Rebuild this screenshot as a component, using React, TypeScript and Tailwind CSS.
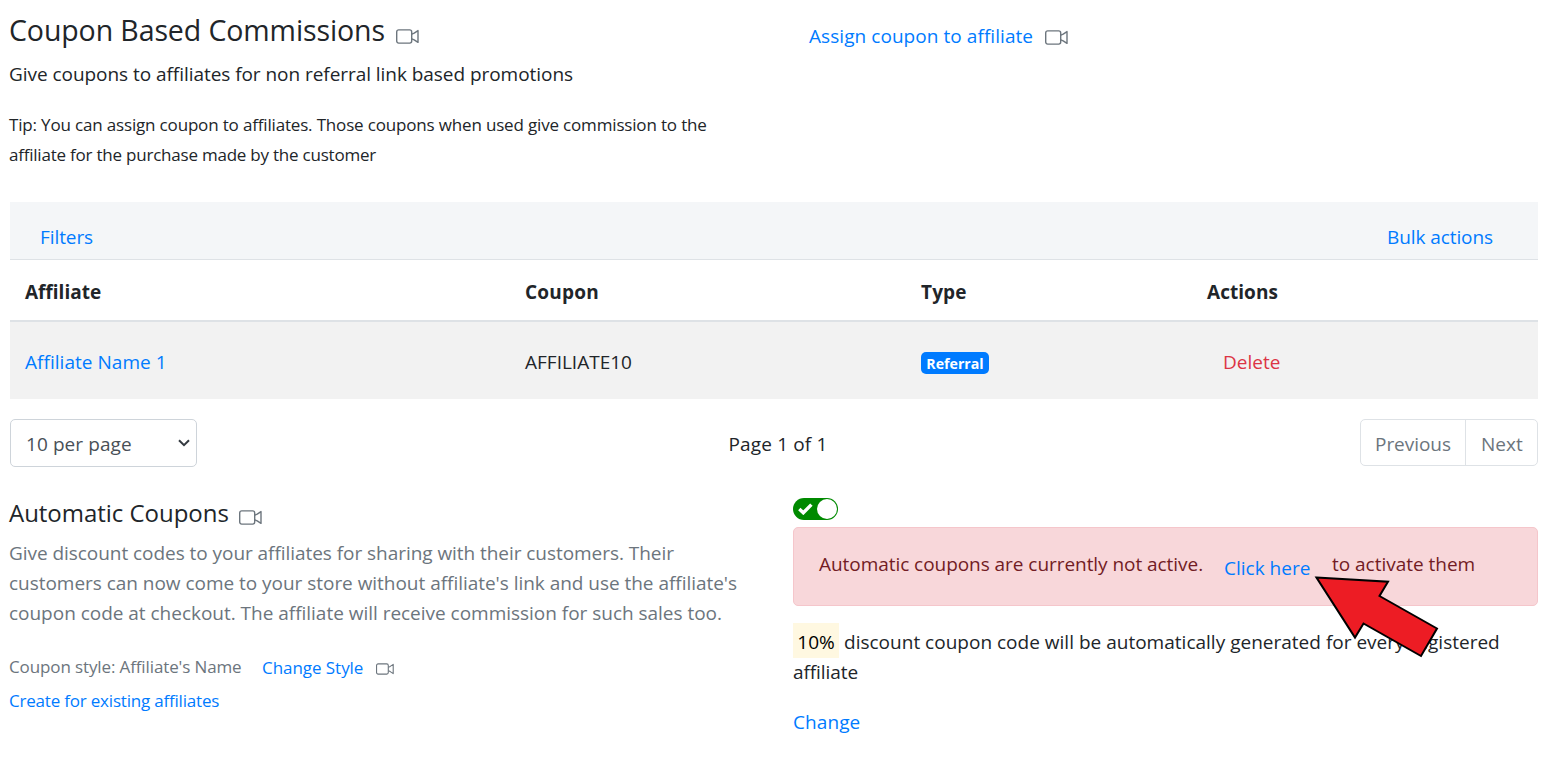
import React from "react";

function Camera({ className }: { className: string }) {
  return (
    <svg viewBox="0 0 23 15" fill="none" stroke="#6c757d" strokeWidth="1.4" strokeLinejoin="round" className={className}>
      <rect x="0.7" y="0.9" width="15" height="13.2" rx="2" />
      <path d="M15.8 5.2 L18.2 4.2 L22 1.6 V13.4 L18.2 10.8 L15.8 9.8" />
    </svg>
  );
}

export default function App() {
  return (
    <div className="h-[761px] w-[1547px] overflow-hidden bg-white pr-[9px] pl-[10px] font-['Open_Sans','Noto_Sans',sans-serif] text-[19px] leading-[30px] whitespace-nowrap text-[#212529]">
      <section className="-ml-px flex h-[202px]">
        <div className="w-[800px] pt-3">
          <div className="flex h-9 items-center">
            <h1 className="w-[387px] text-[28.5px] leading-9 tracking-[-0.1px]">Coupon Based Commissions</h1>
            <Camera className="mt-3 h-[15px] w-[23px]" />
          </div>
          <p className="mt-[11px] tracking-[-0.048px]">Give coupons to affiliates for non referral link based promotions</p>
          <p className="mt-[21px] text-[17px] tracking-[-0.168px]">
            Tip: You can assign coupon to affiliates. Those coupons when used give commission to the
            <br />
            <span className="tracking-[-0.22px]">affiliate for the purchase made by the customer</span>
          </p>
        </div>
        <div className="flex h-[51px] pt-[21px]">
          <a className="w-[236px] tracking-[0.06px] text-[#007bff]">Assign coupon to affiliate</a>
          <Camera className="mt-[9px] h-[15px] w-[23px]" />
        </div>
      </section>

      <section>
        <div className="flex h-[57px] items-center justify-between bg-[#f4f6f8] pt-[13px] pr-[45px] pl-[30px] text-[#007bff]">
          <a className="tracking-[-0.09px]">Filters</a>
          <a className="tracking-[-0.08px]">Bulk actions</a>
        </div>
        <table className="w-full table-fixed border-collapse text-left">
          <colgroup>
            <col className="w-[500px]" />
            <col className="w-[396px]" />
            <col className="w-[286px]" />
            <col />
          </colgroup>
          <thead>
            <tr className="h-[61px] border-t border-b-2 border-[#dee2e6] font-bold">
              <th className="px-[15px] pt-[5px]">Affiliate</th>
              <th className="px-[15px] pt-[5px] tracking-[0.2px]">Coupon</th>
              <th className="px-[15px] pt-[5px] tracking-[0.15px]">Type</th>
              <th className="px-[15px] pt-[5px] tracking-[0.05px]">Actions</th>
            </tr>
          </thead>
          <tbody>
            <tr className="h-[78px] bg-[#f2f2f2]">
              <td className="px-[15px] pt-1 tracking-[0.04px] text-[#007bff]">Affiliate Name 1</td>
              <td className="px-[15px] pt-1">AFFILIATE10</td>
              <td className="px-[15px] pt-[6px]">
                <span className="block h-[22px] w-[68px] rounded-[5px] bg-[#007bff] text-center text-[14.2px] leading-[23px] font-bold text-white">Referral</span>
              </td>
              <td className="pt-1 pl-[31px] text-[#dc3545]">Delete</td>
            </tr>
          </tbody>
        </table>
      </section>

      <section className="flex h-[68px] items-start justify-between pt-5">
        <div className="flex h-12 w-[187px] items-center justify-between rounded-[5px] border border-[#ced4da] pr-[6px] pl-[15px] text-[#495057]">
          <span className="pt-[2px] tracking-[0.08px]">10 per page</span>
          <svg viewBox="0 0 12 8" className="h-2 w-3" fill="none" stroke="#343a40" strokeWidth="2">
            <path d="M1 1.2 L6 6.2 L11 1.2" />
          </svg>
        </div>
        <span className="mr-[97px] ml-[96px] flex-1 pt-[10px] text-center tracking-[0.15px]">Page 1 of 1</span>
        <div className="flex h-[47px] w-[178px] rounded-[5px] border border-[#dee2e6] text-[#6c757d]">
          <span className="w-[105px] border-r border-[#dee2e6] pt-[9px] pl-[14px] tracking-[-0.04px]">Previous</span>
          <span className="pt-[9px] pl-[15px]">Next</span>
        </div>
      </section>

      <section className="-ml-px flex pt-[31px]">
        <div className="w-[784px] text-[#6c757d]">
          <div className="flex h-[30px] items-center">
            <h2 className="w-[230px] text-[24px] tracking-[-0.03px] text-[#212529]">Automatic Coupons</h2>
            <Camera className="mt-[9px] h-[15px] w-[23px]" />
          </div>
          <p className="mt-[10px]">
            <span className="tracking-[-0.05px]">Give discount codes to your affiliates for sharing with their customers. Their</span>
            <br />
            <span className="tracking-[-0.031px]">customers can now come to your store without affiliate's link and use the affiliate's</span>
            <br />
            <span className="tracking-[-0.021px]">coupon code at checkout. The affiliate will receive commission for such sales too.</span>
          </p>
          <div className="mt-6 flex text-[17px]">
            <span className="w-[253px] tracking-[-0.12px]">Coupon style: Affiliate's Name</span>
            <a className="w-[114px] pt-px tracking-[-0.05px] text-[#007bff]">Change Style</a>
            <Camera className="mt-[11px] h-3 w-[18px]" />
          </div>
          <a className="mt-[3px] block text-[17px] tracking-[-0.2px] text-[#007bff]">Create for existing affiliates</a>
        </div>

        <div className="w-[745px]">
          <div className="flex h-[22px] w-[45px] items-center justify-between rounded-full bg-[#008a00] pr-px pl-[5px]">
            <svg viewBox="0 0 15 12" className="h-3 w-[15px]" fill="none" stroke="#fff" strokeWidth="3.4">
              <path d="M1.3 6 L5.3 9.8 L13.4 1.6" />
            </svg>
            <span className="size-5 rounded-full bg-white" />
          </div>
          <div className="relative mt-[7px] flex h-[79px] rounded-[5px] border border-[#f5c6cb] bg-[#f8d7da] pt-[21px] pl-[25px] text-[#721c24]">
            <span className="w-[405px] tracking-[-0.05px]">Automatic coupons are currently not active.</span>
            <a className="w-[108px] pt-1 text-[#007bff]">Click here</a>
            <span className="tracking-[-0.02px]">to activate them</span>
            <svg viewBox="0 0 130 90" className="absolute top-[44px] left-[518px] h-[90px] w-[130px]" fill="#ed1c24" stroke="#000" strokeWidth="2">
              <path d="M4.5 5.5 L76 9.7 L67.5 24 L125 56.5 L109 84 L51.5 51.5 L43 65.5 Z" />
            </svg>
          </div>
          <p className="mt-[21px]">
            <mark className="mr-[5px] inline-block h-[30px] w-[46px] bg-[#fff8e1] text-center text-black shadow-[0_-4px_0_#fff8e1,0_1px_0_#fff8e1]">10%</mark>
            <span className="tracking-[0.01px]">discount coupon code will be automatically generated for every registered</span>
            <br />
            <span className="tracking-[-0.08px]">affiliate</span>
          </p>
          <a className="mt-5 block tracking-[0.08px] text-[#007bff]">Change</a>
        </div>
      </section>
    </div>
  );
}
